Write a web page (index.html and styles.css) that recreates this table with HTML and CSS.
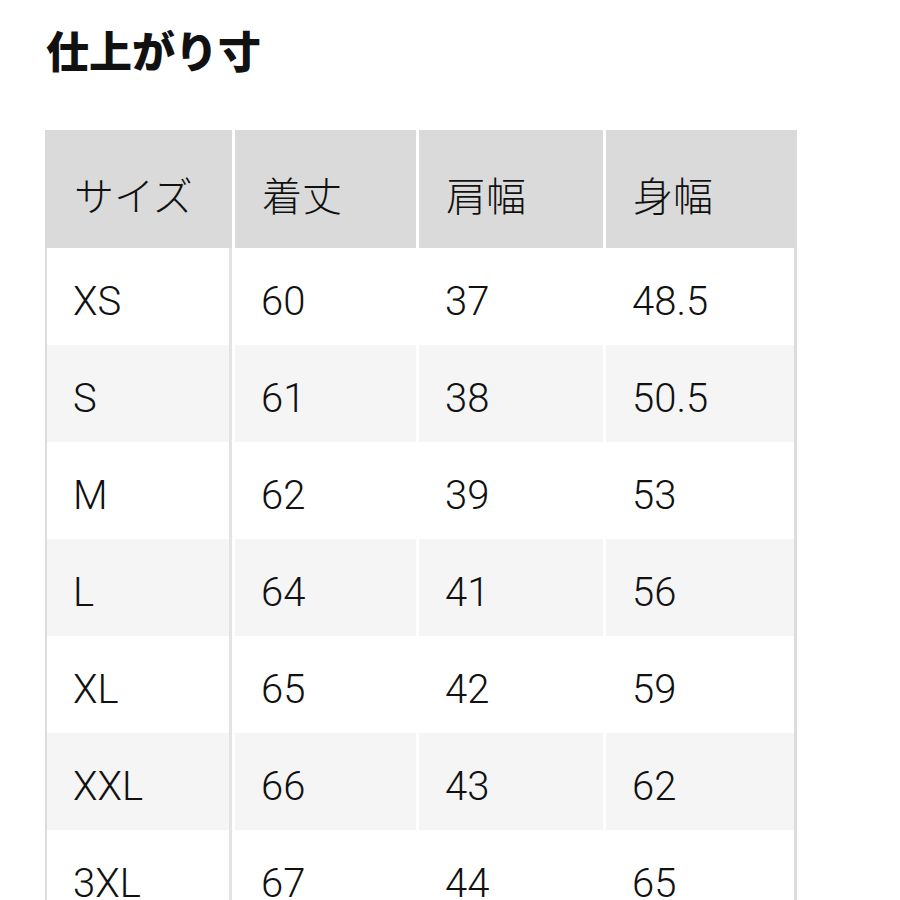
FILE: index.html
```html
<!DOCTYPE html>
<html lang="ja">
<head>
<meta charset="utf-8">
<title>仕上がり寸</title>
<link rel="stylesheet" href="styles.css">
</head>
<body>
<main class="page">
  <h1 class="title">仕上がり寸</h1>
  <div class="size-table">
    <div class="row head">
      <div class="cell">サイズ</div>
      <div class="cell">着丈</div>
      <div class="cell">肩幅</div>
      <div class="cell">身幅</div>
    </div>
    <div class="row">
      <div class="cell">XS</div><div class="cell">60</div><div class="cell">37</div><div class="cell">48.5</div>
    </div>
    <div class="row alt">
      <div class="cell">S</div><div class="cell">61</div><div class="cell">38</div><div class="cell">50.5</div>
    </div>
    <div class="row">
      <div class="cell">M</div><div class="cell">62</div><div class="cell">39</div><div class="cell">53</div>
    </div>
    <div class="row alt">
      <div class="cell">L</div><div class="cell">64</div><div class="cell">41</div><div class="cell">56</div>
    </div>
    <div class="row">
      <div class="cell">XL</div><div class="cell">65</div><div class="cell">42</div><div class="cell">59</div>
    </div>
    <div class="row alt">
      <div class="cell">XXL</div><div class="cell">66</div><div class="cell">43</div><div class="cell">62</div>
    </div>
    <div class="row">
      <div class="cell">3XL</div><div class="cell">67</div><div class="cell">44</div><div class="cell">65</div>
    </div>
  </div>
</main>
</body>
</html>
```

FILE: styles.css
```css
html, body {
  margin: 0;
  padding: 0;
  background: #ffffff;
  overflow: hidden;
}

.page {
  padding: 24px 0 0 45px;
  color: #111111;
}

.title {
  margin: 0 0 54px 1px;
  font-family: "Noto Sans CJK JP", "Noto Sans", sans-serif;
  font-size: 43px;
  font-weight: 900;
  line-height: 1.2;
  letter-spacing: 0;
}

.size-table {
  width: 752px;
  display: flex;
  flex-direction: column;
}

.row {
  display: grid;
  grid-template-columns: 185px 181px 184px 188px;
  column-gap: 3px;
  height: 97px;
  border-left: 2px solid #dcdcdc;
  border-right: 3px solid #dcdcdc;
  font-family: "Roboto", "Liberation Sans", sans-serif;
  font-size: 40px;
  font-weight: 300;
}

.row .cell {
  display: flex;
  align-items: center;
  padding: 10px 0 0 26px;
  box-sizing: border-box;
  background: #ffffff;
}

.row .cell:first-child {
  border-right: 3px solid #e3e3e3;
}

.row.alt .cell {
  background: #f5f5f5;
}

.row.head {
  height: 118px;
  border-left-color: #dadada;
  border-right-color: #dadada;
  font-family: "Noto Sans CJK JP", "Noto Sans", sans-serif;
  font-size: 40px;
  font-weight: 300;
}

.row.head .cell {
  background: #dadada;
  padding-left: 27px;
}

.row.head .cell:first-child {
  border-right: 0;
}
```
